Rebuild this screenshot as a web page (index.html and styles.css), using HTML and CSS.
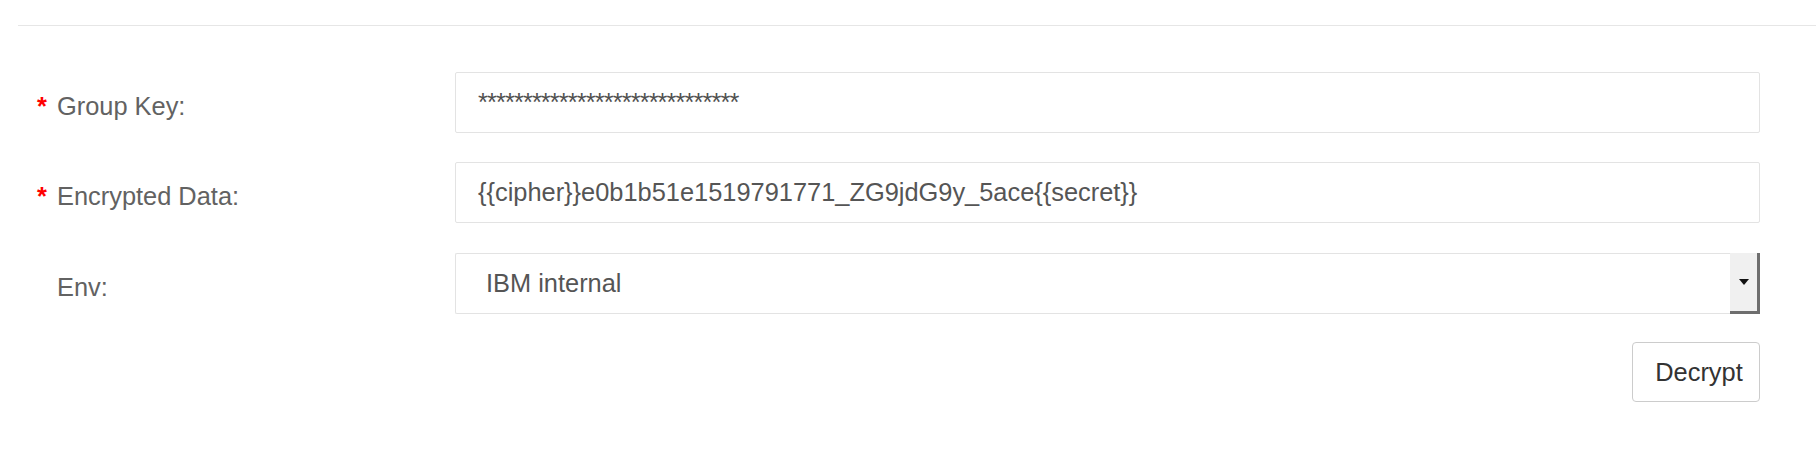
FILE: index.html
```html
<!DOCTYPE html>
<html>
<head>
<meta charset="utf-8">
<link rel="stylesheet" href="styles.css">
</head>
<body>
<div class="page">
  <div class="rule"></div>
  <form class="form">
    <div class="row">
      <label class="label"><span class="req">*</span>Group Key:</label>
      <div class="field"><div class="input input-masked">*****************************</div></div>
    </div>
    <div class="row">
      <label class="label"><span class="req">*</span>Encrypted Data:</label>
      <div class="field"><div class="input">{{cipher}}e0b1b51e1519791771_ZG9jdG9y_5ace{{secret}}</div></div>
    </div>
    <div class="row row-select">
      <label class="label"><span class="req req-empty"></span>Env:</label>
      <div class="field">
        <div class="select">
          <span class="select-value">IBM internal</span>
          <span class="select-arrow"><svg width="10" height="6" viewBox="0 0 10 6"><path d="M0 0 H10 L5 6 Z" fill="#111"/></svg></span>
        </div>
      </div>
    </div>
    <div class="actions">
      <button type="button" class="btn">Decrypt</button>
    </div>
  </form>
</div>
</body>
</html>
```

FILE: styles.css
```css
html, body {
  margin: 0;
  padding: 0;
  background: #fff;
}
body {
  font-family: "Liberation Sans", Arial, Helvetica, sans-serif;
  font-size: 25.4px;
}
.page {
  padding: 25px 0 0 18px;
}
.rule {
  height: 1px;
  background: #e6e6e6;
}
.form {
  margin: 46px 56px 0 0;
  display: flex;
  flex-direction: column;
}
.row {
  display: flex;
  align-items: center;
  height: 61px;
  margin-bottom: 29px;
}
.row-select {
  margin-top: 1px;
  margin-bottom: 28px;
}
.label {
  width: 437px;
  flex: none;
  box-sizing: border-box;
  padding: 7px 0 0 19px;
  color: #626262;
  display: flex;
  align-items: baseline;
}
.req {
  color: #f00;
  width: 20px;
  flex: none;
  font-weight: bold;
}
.field {
  flex: 1;
  height: 100%;
}
.input {
  box-sizing: border-box;
  height: 100%;
  border: 1px solid #e3e3e3;
  border-radius: 2px;
  padding: 0 22px;
  display: flex;
  align-items: center;
  color: #555;
  white-space: nowrap;
}
.input-masked {
  letter-spacing: -0.9px;
  color: #505050;
}
.select {
  box-sizing: border-box;
  height: 100%;
  border: 1px solid #e3e3e3;
  border-right: none;
  border-radius: 2px 0 0 2px;
  display: flex;
  align-items: stretch;
  color: #555;
}
.select-value {
  flex: 1;
  display: flex;
  align-items: center;
  padding-left: 30px;
}
.select-arrow {
  width: 27px;
  flex: none;
  background: #f0f0f0;
  border-right: 3px solid #6e6e6e;
  border-bottom: 3px solid #6e6e6e;
  margin: -1px 0 -1px 0;
  display: flex;
  align-items: center;
  justify-content: center;
}
.actions {
  display: flex;
  justify-content: flex-end;
}
.btn {
  width: 128px;
  height: 60px;
  box-sizing: border-box;
  border: 1px solid #ccc;
  border-radius: 4px;
  background: #fff;
  color: #333;
  font-family: inherit;
  font-size: 25.4px;
  padding: 0 0 0 6px;
}
```
